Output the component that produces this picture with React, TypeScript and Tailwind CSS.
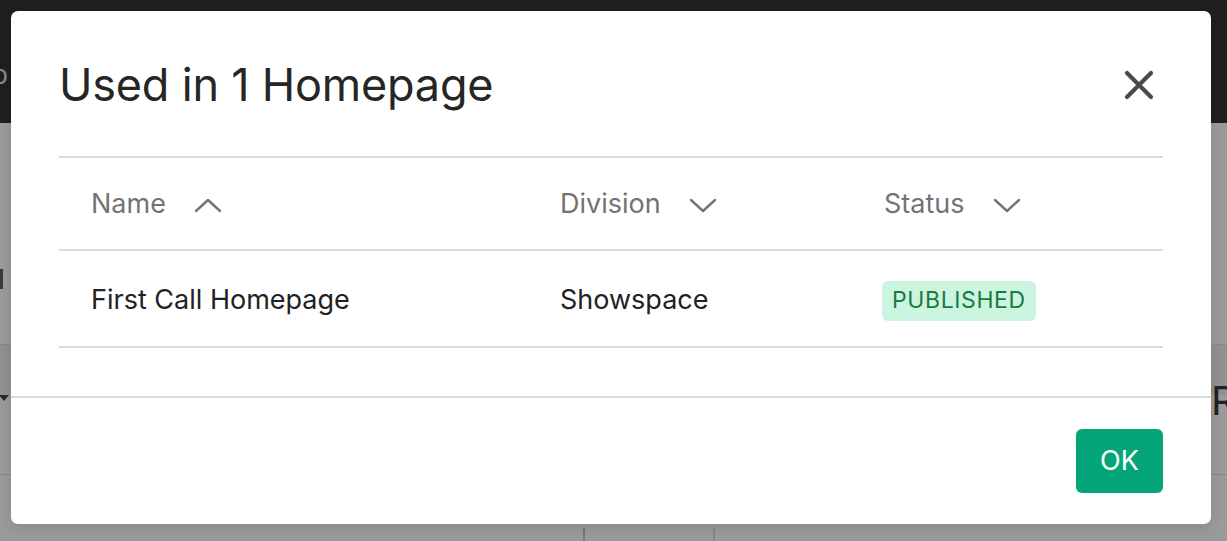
import React from 'react';

function Chevron({ up = false }: { up?: boolean }) {
  return (
    <svg width="28" height="16" viewBox="0 0 28 16" fill="none" className="ml-[28px]">
      <path
        d={up ? 'M2 14 L14 3 L26 14' : 'M2 3 L14 14 L26 3'}
        stroke="#757575"
        strokeWidth="2.4"
        strokeLinecap="round"
        strokeLinejoin="round"
      />
    </svg>
  );
}

function CloseIcon() {
  return (
    <svg width="32" height="32" viewBox="0 0 32 32" fill="none">
      <path d="M4 4 L28 28 M28 4 L4 28" stroke="#4a4a4a" strokeWidth="4.2" strokeLinecap="round" />
    </svg>
  );
}

export default function App() {
  return (
    <div
      className="relative w-[1227px] h-[541px] overflow-hidden bg-[#9b9b9b]"
      style={{ fontFamily: 'Inter, "Noto Sans", "Liberation Sans", sans-serif' }}
    >
      {/* page behind the backdrop */}
      <div className="h-[123px] bg-[#1f1f1f] flex items-center">
        <span className="text-[26px] leading-none text-[#8a8a8a] -ml-[8px] mt-[26px]">p</span>
      </div>
      <div className="flex flex-col">
        <div className="h-[222px] border-b border-[#8a8a8a] flex items-center">
          <span className="w-[3px] h-[20px] bg-[#3a3a3a] mt-[90px]" />
        </div>
        <div className="h-[50px] bg-[#919191] flex justify-between items-end">
          <span className="w-0 h-0 border-l-[5px] border-r-[5px] border-t-[6px] border-l-transparent border-r-transparent border-t-[#2a2a2a] -ml-[1px] mb-[-6px]" />
        </div>
        <div className="h-[80px] border-b border-[#888]" />
        <div className="h-[53px]" />
        <div className="flex h-[20px] pl-[583px]">
          <span className="w-[2px] h-full bg-[#777]" />
          <span className="w-[130px] border-r-2 border-[#888]" />
        </div>
      </div>
      <span className="absolute left-[1211px] top-[381px] text-[40px] leading-none text-[#222]">R</span>

      {/* dialog */}
      <div className="absolute left-[11px] top-[11px] w-[1200px] h-[513px] bg-white rounded-[7px] flex flex-col shadow-[0_4px_16px_rgba(0,0,0,0.12)]">
        <div className="flex items-center justify-between pl-[48px] pr-[56px] h-[145px] pt-[2px]">
          <h2 className="text-[45px] text-[#262626] tracking-[-0.2px]">Used in 1 Homepage</h2>
          <CloseIcon />
        </div>

        <div className="mx-[48px] border-t-2 border-[#dadada]">
          <div className="grid grid-cols-[469px_324px_1fr] h-[93px] items-center pt-[2px] border-b-2 border-[#dadada] text-[27px] text-[#737373]">
            <div className="flex items-center pl-[32px]">
              Name
              <Chevron up />
            </div>
            <div className="flex items-center pl-[32px]">
              Division
              <Chevron />
            </div>
            <div className="flex items-center pl-[32px]">
              Status
              <Chevron />
            </div>
          </div>
          <div className="grid grid-cols-[469px_324px_1fr] h-[97px] items-center pt-[3px] border-b-2 border-[#dadada] text-[27px] text-[#222]">
            <div className="pl-[32px]">First Call Homepage</div>
            <div className="pl-[32px]">Showspace</div>
            <div className="pl-[30px]">
              <span className="inline-flex items-center h-[40px] px-[10px] rounded-[6px] bg-[#cbf5e0] text-[#1b7a3f] text-[23px] tracking-[0.6px]">
                PUBLISHED
              </span>
            </div>
          </div>
        </div>

        <div className="mt-[48px] border-t-2 border-[#dadada] flex justify-end pr-[48px] pt-[31px]">
          <button className="w-[87px] h-[64px] rounded-[6px] bg-[#05a57a] text-white text-[27px]">OK</button>
        </div>
      </div>
    </div>
  );
}
